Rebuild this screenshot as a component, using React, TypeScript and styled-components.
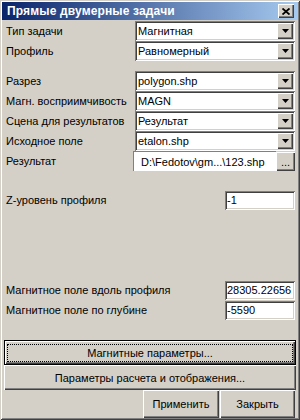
import styled, { createGlobalStyle } from 'styled-components';

const GlobalStyle = createGlobalStyle`
  html, body {
    margin: 0;
    padding: 0;
    background: #d4d0c8;
  }
  body {
    font-family: "Liberation Sans", Arial, sans-serif;
    font-size: 11px;
    color: #000;
  }
`;

const raised = `
  background: #d4d0c8;
  box-shadow: inset 1px 1px #ffffff, inset -1px -1px #404040, inset -2px -2px #808080;
`;

const sunken = `
  background: #ffffff;
  box-shadow: inset 1px 1px #808080, inset -1px -1px #ffffff, inset 2px 2px #404040, inset -2px -2px #d4d0c8;
`;

const Window = styled.div`
  width: 300px;
  height: 420px;
  box-sizing: border-box;
  padding: 2px;
  background: #d4d0c8;
  box-shadow: inset 1px 1px #d4d0c8, inset -1px -1px #404040, inset 2px 2px #ffffff, inset -2px -2px #808080;
  display: flex;
  flex-direction: column;
`;

const TitleBar = styled.div`
  height: 18px;
  flex-shrink: 0;
  display: flex;
  align-items: center;
  justify-content: space-between;
  padding: 0 4px 0 5px;
  background: linear-gradient(to right, #0a246a, #a6caf0);
`;

const Title = styled.span`
  color: #fff;
  font-weight: bold;
  font-size: 12px;
  letter-spacing: 0.15px;
`;

const CloseButton = styled.div`
  width: 16px;
  height: 14px;
  display: flex;
  align-items: center;
  justify-content: center;
  ${raised}
`;

const Content = styled.div`
  display: flex;
  flex-direction: column;
  padding: 1px 3px 0 4px;
`;

const Group = styled.div<{ $top: number }>`
  display: flex;
  flex-direction: column;
  margin-top: ${(p) => p.$top}px;
`;

const FieldRow = styled.div`
  display: grid;
  grid-template-columns: 129px 160px;
  align-items: center;
  height: 20px;
`;

const Label = styled.span`
  white-space: nowrap;
`;

const Combo = styled.div`
  height: 20px;
  box-sizing: border-box;
  padding: 2px;
  display: flex;
  align-items: center;
  ${sunken}
`;

const ComboText = styled.span`
  flex: 1;
  padding-left: 1px;
  white-space: nowrap;
  overflow: hidden;
`;

const ArrowButton = styled.div`
  width: 16px;
  height: 16px;
  display: flex;
  align-items: center;
  justify-content: center;
  ${raised}
`;

const PathWrap = styled.div`
  display: flex;
  height: 20px;
  margin-left: -2px;
`;

const PathText = styled.div`
  flex: 1;
  box-sizing: border-box;
  background: #fff;
  border-top: 1px solid #808080;
  border-left: 1px solid #808080;
  padding-left: 7px;
  display: flex;
  align-items: center;
  white-space: nowrap;
`;

const BrowseButton = styled.div`
  width: 19px;
  margin-top: 1px;
  display: flex;
  align-items: center;
  justify-content: center;
  ${raised}
`;

const ValueRow = styled.div`
  display: flex;
  align-items: center;
  justify-content: space-between;
  height: 20px;
`;

const ValueBox = styled.div`
  width: 70px;
  height: 19px;
  box-sizing: border-box;
  padding: 0 2px;
  display: flex;
  align-items: center;
  white-space: nowrap;
  overflow: hidden;
  ${sunken}
`;

const Buttons = styled.div`
  margin-top: auto;
  padding: 0 2px;
  display: flex;
  flex-direction: column;
`;

const WideButton = styled.div<{ $default?: boolean }>`
  height: 25px;
  box-sizing: border-box;
  display: flex;
  align-items: center;
  justify-content: center;
  position: relative;
  ${raised}
  ${(p) => (p.$default ? 'border: 1px solid #000;' : '')}
`;

const FocusRing = styled.div`
  position: absolute;
  inset: 3px 2px 2px 2px;
  border: 1px dotted #000;
`;

const Footer = styled.div`
  display: flex;
  justify-content: flex-end;
  gap: 1px;
  padding-right: 1px;
  height: 28px;
`;

const FooterButton = styled.div<{ $w: number }>`
  width: ${(p) => p.$w}px;
  display: flex;
  align-items: center;
  justify-content: center;
  ${raised}
`;

function Arrow() {
  return (
    <svg width="7" height="4" viewBox="0 0 7 4">
      <path d="M0 0h7L3.5 4z" fill="#000" />
    </svg>
  );
}

function ComboField({ label, value }: { label: string; value: string }) {
  return (
    <FieldRow>
      <Label>{label}</Label>
      <Combo>
        <ComboText>{value}</ComboText>
        <ArrowButton>
          <Arrow />
        </ArrowButton>
      </Combo>
    </FieldRow>
  );
}

export default function App() {
  return (
    <>
      <GlobalStyle />
      <Window>
        <TitleBar>
          <Title>Прямые двумерные задачи</Title>
          <CloseButton>
            <svg width="8" height="7" viewBox="0 0 8 7">
              <path d="M0.5 0.5l7 6M7.5 0.5l-7 6" stroke="#000" strokeWidth="1.8" />
            </svg>
          </CloseButton>
        </TitleBar>
        <Content>
          <Group $top={0}>
            <ComboField label="Тип задачи" value="Магнитная" />
            <ComboField label="Профиль" value="Равномерный" />
          </Group>
          <Group $top={10}>
            <ComboField label="Разрез" value="polygon.shp" />
            <ComboField label="Магн. восприимчивость" value="MAGN" />
            <ComboField label="Сцена для результатов" value="Результат" />
            <ComboField label="Исходное поле" value="etalon.shp" />
            <FieldRow>
              <Label>Результат</Label>
              <PathWrap>
                <PathText>D:\Fedotov\gm...\123.shp</PathText>
                <BrowseButton>...</BrowseButton>
              </PathWrap>
            </FieldRow>
          </Group>
          <Group $top={19}>
            <ValueRow>
              <Label>Z-уровень профиля</Label>
              <ValueBox>-1</ValueBox>
            </ValueRow>
          </Group>
          <Group $top={70}>
            <ValueRow>
              <Label>Магнитное поле вдоль профиля</Label>
              <ValueBox>28305.22656</ValueBox>
            </ValueRow>
            <ValueRow>
              <Label>Магнитное поле по глубине</Label>
              <ValueBox>-5590</ValueBox>
            </ValueRow>
          </Group>
        </Content>
        <Buttons>
          <WideButton $default>
            <FocusRing />
            Магнитные параметры...
          </WideButton>
          <WideButton>Параметры расчета и отображения...</WideButton>
          <Footer>
            <FooterButton $w={76}>Применить</FooterButton>
            <FooterButton $w={75}>Закрыть</FooterButton>
          </Footer>
        </Buttons>
      </Window>
    </>
  );
}
